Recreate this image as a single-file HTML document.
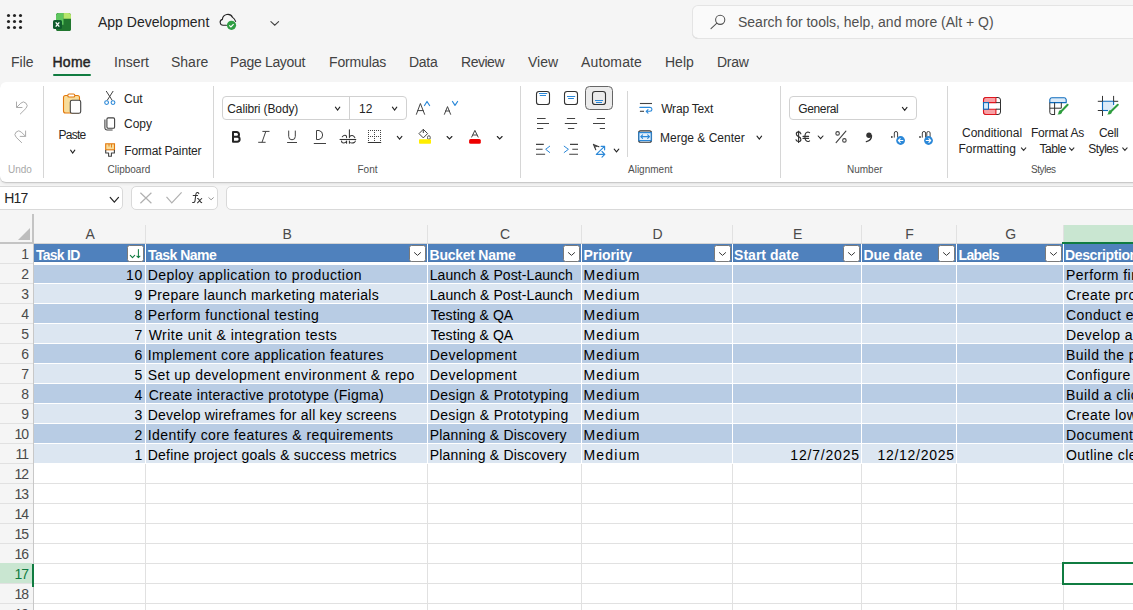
<!DOCTYPE html>
<html><head><meta charset="utf-8"><style>
html,body{margin:0;padding:0;}
body{width:1133px;height:610px;overflow:hidden;position:relative;background:#f5f5f5;font-family:"Liberation Sans", sans-serif;}
.t{position:absolute;line-height:1;white-space:nowrap;}
svg{overflow:visible;}
</style></head><body>
<svg style="position:absolute;left:0px;top:0px" width="30" height="40" viewBox="0 0 30 40" fill="none"><circle cx="8.5" cy="15.5" r="1.55" fill="#242424"/><circle cx="8.5" cy="21.5" r="1.55" fill="#242424"/><circle cx="8.5" cy="27.5" r="1.55" fill="#242424"/><circle cx="14.5" cy="15.5" r="1.55" fill="#242424"/><circle cx="14.5" cy="21.5" r="1.55" fill="#242424"/><circle cx="14.5" cy="27.5" r="1.55" fill="#242424"/><circle cx="20.5" cy="15.5" r="1.55" fill="#242424"/><circle cx="20.5" cy="21.5" r="1.55" fill="#242424"/><circle cx="20.5" cy="27.5" r="1.55" fill="#242424"/></svg>
<svg style="position:absolute;left:50px;top:10px" width="24" height="24" viewBox="50 10 24 24" fill="none"><rect x="56" y="13" width="15" height="18" rx="2.6" fill="#1f6b2e"/><path d="M59 13 H63.5 V18.8 H71 V28.4 A2.6 2.6 0 0 1 68.4 31 H58.6 A2.6 2.6 0 0 1 56 28.4 V16 A3 3 0 0 1 59 13Z" fill="#21762f"/><path d="M59 13 H63.5 V24.8 H56 V16 A3 3 0 0 1 59 13Z" fill="#5fc65f"/><path d="M63.5 13 H68.4 A2.6 2.6 0 0 1 71 15.6 V18.8 H63.5Z" fill="#b6e76c"/><rect x="53" y="20" width="9" height="9" rx="1.6" fill="#0f5c2d"/><path d="M55.7 22.3 L59.3 26.7 M59.3 22.3 L55.7 26.7" stroke="#fff" stroke-width="1.3"/></svg>
<div class="t" style="left:98px;top:15.15px;font-size:14px;color:#242424;">App Development</div>
<svg style="position:absolute;left:215px;top:10px" width="26" height="24" viewBox="215 10 26 24" fill="none"><path d="M226.5 25.3 H223.3 A3 3 0 0 1 222.4 19.4 A5.4 5.4 0 0 1 232.6 17.4 Q234.6 18.8 235.6 21.4" stroke="#242424" stroke-width="1.1" stroke-linecap="round"/><circle cx="231.5" cy="25.3" r="4.6" fill="#2f9e44"/><path d="M229.3 25.4 L230.9 26.9 L233.6 24.1" stroke="#fff" stroke-width="1.2" /></svg>
<svg style="position:absolute;left:268px;top:19px" width="13" height="9" viewBox="268 19 13 9" fill="none"><path d="M270.9 21.7 L274.75 25.2 L278.6 21.7" stroke="#424242" stroke-width="1.1" stroke-linecap="round" stroke-linejoin="miter"/></svg>
<div style="position:absolute;left:692px;top:5px;width:470px;height:34px;background:#fafafa;border-radius:6px;box-shadow:inset 0 0 0 1px #e4e4e4, inset 0 -1px 0 #cdcdcd;"></div>
<svg style="position:absolute;left:705px;top:10px" width="24" height="24" viewBox="705 10 24 24" fill="none"><circle cx="720.2" cy="19.8" r="4.6" stroke="#505050" stroke-width="1.05"/><path d="M716.9 23.2 L711 28.6" stroke="#505050" stroke-width="1.05" stroke-linecap="round"/></svg>
<div class="t" style="left:738px;top:14.65px;font-size:14px;color:#505050;">Search for tools, help, and more (Alt + Q)</div>
<div class="t" style="left:11px;top:55.15px;font-size:14px;color:#424242;">File</div>
<div class="t" style="left:52.4px;top:55.15px;font-size:14px;color:#242424;letter-spacing:0.300px;-webkit-text-stroke:0.45px #242424;">Home</div>
<div class="t" style="left:114px;top:55.15px;font-size:14px;color:#424242;">Insert</div>
<div class="t" style="left:171px;top:55.15px;font-size:14px;color:#424242;">Share</div>
<div class="t" style="left:230px;top:55.15px;font-size:14px;color:#424242;letter-spacing:-0.330px;">Page Layout</div>
<div class="t" style="left:329px;top:55.15px;font-size:14px;color:#424242;letter-spacing:-0.140px;">Formulas</div>
<div class="t" style="left:409px;top:55.15px;font-size:14px;color:#424242;letter-spacing:-0.300px;">Data</div>
<div class="t" style="left:461px;top:55.15px;font-size:14px;color:#424242;letter-spacing:-0.480px;">Review</div>
<div class="t" style="left:528px;top:55.15px;font-size:14px;color:#424242;">View</div>
<div class="t" style="left:581px;top:55.15px;font-size:14px;color:#424242;letter-spacing:0.140px;">Automate</div>
<div class="t" style="left:665px;top:55.15px;font-size:14px;color:#424242;">Help</div>
<div class="t" style="left:717px;top:55.15px;font-size:14px;color:#424242;letter-spacing:-0.250px;">Draw</div>
<div style="position:absolute;left:53px;top:74px;width:38px;height:2px;background:#117c41;border-radius:1px;"></div>
<div style="position:absolute;left:0px;top:82px;width:1160px;height:100px;background:#fff;border-radius:6px;box-shadow:0 1px 1px rgba(0,0,0,0.14), 0 2px 3px rgba(0,0,0,0.07);"></div>
<div style="position:absolute;left:43px;top:86px;width:1px;height:92px;background:#d6d6d6;"></div>
<div style="position:absolute;left:213px;top:86px;width:1px;height:92px;background:#d6d6d6;"></div>
<div style="position:absolute;left:520px;top:86px;width:1px;height:92px;background:#d6d6d6;"></div>
<div style="position:absolute;left:780px;top:86px;width:1px;height:92px;background:#d6d6d6;"></div>
<div style="position:absolute;left:947px;top:86px;width:1px;height:92px;background:#d6d6d6;"></div>
<div style="position:absolute;left:627px;top:91px;width:1px;height:66px;background:#d6d6d6;"></div>
<svg style="position:absolute;left:12px;top:98px" width="20" height="20" viewBox="12 98 20 20" fill="none"><path d="M16.5 102 V107.5 H22" stroke="#ababab" stroke-width="1" stroke-linecap="round" stroke-linejoin="round"/><path d="M16.8 107.2 L20.8 103.2 A3.6 3.6 0 0 1 26 108.3 L20.3 114" stroke="#ababab" stroke-width="1" stroke-linecap="round"/></svg>
<svg style="position:absolute;left:12px;top:127px" width="20" height="20" viewBox="12 127 20 20" fill="none"><path d="M25.6 131 V136.4 H20.2" stroke="#ababab" stroke-width="1" stroke-linecap="round" stroke-linejoin="round"/><path d="M25.3 136.1 L21.3 132.1 A3.6 3.6 0 0 0 16.1 137.2 L21.6 142.6" stroke="#ababab" stroke-width="1" stroke-linecap="round"/></svg>
<div class="t" style="left:8px;top:164.53px;font-size:10px;color:#a8a8a8;">Undo</div>
<svg style="position:absolute;left:58px;top:90px" width="28" height="28" viewBox="58 90 28 28" fill="none"><path d="M65.5 95.5 H77.5 A2 2 0 0 1 79.5 97.5 V111 A2 2 0 0 1 77.5 113 H65.5 A2 2 0 0 1 63.5 111 V97.5 A2 2 0 0 1 65.5 95.5Z" fill="#f8dc9a" stroke="#e2780c" stroke-width="1.1"/><rect x="67.8" y="94" width="7" height="3" rx="1.3" fill="#fff" stroke="#e2780c" stroke-width="1.1"/><rect x="70.3" y="100.3" width="10.4" height="13" rx="1.8" fill="#fff" stroke="#424242" stroke-width="1.1"/></svg>
<div class="t" style="left:58.5px;top:128.54px;font-size:12px;color:#242424;letter-spacing:-0.750px;">Paste</div>
<svg style="position:absolute;left:68px;top:147px" width="10" height="8" viewBox="68 147 10 8" fill="none"><path d="M70.60000000000001 150.20000000000002 L72.7 153.0 L74.8 150.20000000000002" stroke="#242424" stroke-width="1.1" stroke-linecap="round" stroke-linejoin="miter"/></svg>
<svg style="position:absolute;left:102px;top:88px" width="16" height="20" viewBox="102 88 16 20" fill="none"><path d="M106.2 91 L112.3 100.5 M113.2 91 L107.1 100.5" stroke="#424242" stroke-width="1" /><circle cx="106.6" cy="102.6" r="1.9" stroke="#2b88d8" stroke-width="1.1"/><circle cx="113" cy="102.6" r="1.9" stroke="#2b88d8" stroke-width="1.1"/></svg>
<div class="t" style="left:124px;top:93.04px;font-size:12px;color:#242424;">Cut</div>
<svg style="position:absolute;left:102px;top:114px" width="16" height="20" viewBox="102 114 16 20" fill="none"><rect x="106.9" y="117.9" width="7.7" height="10.4" rx="1.3" stroke="#424242" stroke-width="1.1"/><path d="M104.9 119.5 V127.8 A2.2 2.2 0 0 0 107.1 130 H112.6" stroke="#424242" stroke-width="1.1" /></svg>
<div class="t" style="left:124px;top:118.44px;font-size:12px;color:#242424;">Copy</div>
<svg style="position:absolute;left:102px;top:140px" width="16" height="20" viewBox="102 140 16 20" fill="none"><rect x="105.7" y="143.8" width="8.8" height="6" fill="#f8dc9a" stroke="#e2780c" stroke-width="1.1"/><path d="M109 144 V146.5 M111.5 144 V147.5" stroke="#e2780c" stroke-width="0.9" /><path d="M105.7 150 V153 H108.6 V156.3 H111.4 V153 H114.4 V150" stroke="#424242" stroke-width="1.1" stroke-linejoin="round"/></svg>
<div class="t" style="left:124.3px;top:144.84px;font-size:12px;color:#242424;letter-spacing:-0.160px;">Format Painter</div>
<div class="t" style="left:107.5px;top:164.53px;font-size:10px;color:#505050;">Clipboard</div>
<div style="position:absolute;left:222px;top:96px;width:185px;height:24px;border:1px solid #d1d1d1;border-radius:4px;box-sizing:border-box;background:#fff;"></div>
<div style="position:absolute;left:349px;top:97px;width:1px;height:22px;background:#d1d1d1;"></div>
<div class="t" style="left:227.3px;top:102.94px;font-size:12px;color:#242424;letter-spacing:-0.130px;">Calibri (Body)</div>
<svg style="position:absolute;left:333px;top:104px" width="10" height="8" viewBox="333 104 10 8" fill="none"><path d="M335.4 107.2 L337.6 110.1 L339.8 107.2" stroke="#242424" stroke-width="1.1" stroke-linecap="round" stroke-linejoin="miter"/></svg>
<div class="t" style="left:359px;top:102.94px;font-size:12px;color:#242424;">12</div>
<svg style="position:absolute;left:390px;top:104px" width="10" height="8" viewBox="390 104 10 8" fill="none"><path d="M392.4 107.2 L394.6 110.1 L396.8 107.2" stroke="#242424" stroke-width="1.1" stroke-linecap="round" stroke-linejoin="miter"/></svg>
<svg style="position:absolute;left:412px;top:98px" width="22" height="20" viewBox="412 98 22 20" fill="none"><path d="M416.4 114.3 L420.4 103.5 L424.6 114.3 M417.8 110.6 H423.2" stroke="#424242" stroke-width="1" stroke-linecap="round" stroke-linejoin="round"/><path d="M424.5 105.5 L427 101.5 L429.6 105.5" stroke="#2b88d8" stroke-width="1.2" stroke-linecap="round" stroke-linejoin="round"/></svg>
<svg style="position:absolute;left:440px;top:98px" width="22" height="20" viewBox="440 98 22 20" fill="none"><path d="M444.4 114.3 L447.5 106.6 L450.6 114.3 M445.5 111 H449.5" stroke="#424242" stroke-width="1" stroke-linecap="round" stroke-linejoin="round"/><path d="M452.5 101.5 L455 105.3 L457.6 101.5" stroke="#2b88d8" stroke-width="1.2" stroke-linecap="round" stroke-linejoin="round"/></svg>
<svg style="position:absolute;left:228px;top:127px" width="16" height="20" viewBox="228 127 16 20" fill="none"><path d="M233 132 H236.6 A2.4 2.4 0 0 1 236.6 136.8 H233 Z M233 136.8 H237.2 A2.45 2.45 0 0 1 237.2 141.7 H233 Z" stroke="#242424" stroke-width="2" stroke-linejoin="round"/></svg>
<svg style="position:absolute;left:255px;top:127px" width="18" height="20" viewBox="255 127 18 20" fill="none"><path d="M262.4 131.4 H269.5 M258.2 142.3 H265.6 M265.8 131.4 L262 142.3" stroke="#424242" stroke-width="1" /></svg>
<svg style="position:absolute;left:284px;top:127px" width="16" height="20" viewBox="284 127 16 20" fill="none"><path d="M288.7 130.6 V136.5 A3.3 3.3 0 0 0 295.3 136.5 V130.6 M287.1 142.5 H297" stroke="#424242" stroke-width="1" /></svg>
<svg style="position:absolute;left:310px;top:127px" width="20" height="20" viewBox="310 127 20 20" fill="none"><path d="M316.5 130.5 H319 A4.6 4.6 0 0 1 319 139.5 H316.5 Z M313.8 143.5 H326" stroke="#424242" stroke-width="1" /></svg>
<svg style="position:absolute;left:337px;top:126px" width="22" height="20" viewBox="337 126 22 20" fill="none"><path d="M339.6 139.5 H356.2" stroke="#333" stroke-width="1.1" /><path d="M342.3 136.8 Q344 134.6 345.9 135.5 Q346.6 136 346.6 137.6 M341.5 141 Q341.6 143 343.9 143 Q346 143 346.6 141.2 M346.6 141 V143.3" stroke="#333" stroke-width="1.05" stroke-linecap="round"/><path d="M349.4 129.8 V137.6 M349.5 136.6 Q352.6 133.8 354.8 137.6 M349.4 141 V143.3 M349.6 142.4 Q352.2 143.8 354.6 142.2 Q355.3 141.6 355.3 141" stroke="#333" stroke-width="1.05" stroke-linecap="round"/></svg>
<svg style="position:absolute;left:366px;top:128px" width="18" height="18" viewBox="366 128 18 18" fill="none"><rect x="368" y="130" width="1" height="1" fill="#444"/><rect x="368" y="132" width="1" height="1" fill="#444"/><rect x="368" y="134" width="1" height="1" fill="#444"/><rect x="368" y="136" width="1" height="1" fill="#444"/><rect x="368" y="138" width="1" height="1" fill="#444"/><rect x="368" y="140" width="1" height="1" fill="#444"/><rect x="370" y="130" width="1" height="1" fill="#444"/><rect x="370" y="136" width="1" height="1" fill="#444"/><rect x="372" y="130" width="1" height="1" fill="#444"/><rect x="372" y="136" width="1" height="1" fill="#444"/><rect x="374" y="130" width="1" height="1" fill="#444"/><rect x="374" y="132" width="1" height="1" fill="#444"/><rect x="374" y="134" width="1" height="1" fill="#444"/><rect x="374" y="136" width="1" height="1" fill="#444"/><rect x="374" y="138" width="1" height="1" fill="#444"/><rect x="374" y="140" width="1" height="1" fill="#444"/><rect x="376" y="130" width="1" height="1" fill="#444"/><rect x="376" y="136" width="1" height="1" fill="#444"/><rect x="378" y="130" width="1" height="1" fill="#444"/><rect x="378" y="136" width="1" height="1" fill="#444"/><rect x="380" y="130" width="1" height="1" fill="#444"/><rect x="380" y="132" width="1" height="1" fill="#444"/><rect x="380" y="134" width="1" height="1" fill="#444"/><rect x="380" y="136" width="1" height="1" fill="#444"/><rect x="380" y="138" width="1" height="1" fill="#444"/><rect x="380" y="140" width="1" height="1" fill="#444"/><path d="M368.3 142.5 H380.7" stroke="#333" stroke-width="1.2" stroke-linecap="round"/></svg>
<svg style="position:absolute;left:394px;top:133px" width="10" height="8" viewBox="394 133 10 8" fill="none"><path d="M397.29999999999995 136.3 L399.59999999999997 139.1 L401.9 136.3" stroke="#242424" stroke-width="1.1" stroke-linecap="round" stroke-linejoin="miter"/></svg>
<svg style="position:absolute;left:416px;top:127px" width="18" height="20" viewBox="416 127 18 20" fill="none"><path d="M419 133.6 L423.3 129.3 L427.6 133.6 L423.3 137.9 Z" stroke="#424242" stroke-width="1" stroke-linejoin="round"/><path d="M423.3 129.1 V133" stroke="#424242" stroke-width="1" /><ellipse cx="428.9" cy="137.6" rx="1.4" ry="1.9" stroke="#424242" stroke-width="0.9"/><rect x="419" y="139.3" width="12" height="4.4" rx="0.8" fill="#ffee00"/></svg>
<svg style="position:absolute;left:444px;top:134px" width="10" height="8" viewBox="444 134 10 8" fill="none"><path d="M447.09999999999997 136.5 L449.5 138.99999999999997 L451.90000000000003 136.5" stroke="#242424" stroke-width="1.1" stroke-linecap="round" stroke-linejoin="miter"/></svg>
<svg style="position:absolute;left:467px;top:127px" width="16" height="20" viewBox="467 127 16 20" fill="none"><path d="M471.5 137.4 L474.9 130.4 L478.3 137.4 M472.6 135 H477.2" stroke="#424242" stroke-width="1" stroke-linejoin="round"/><rect x="469.1" y="139" width="11.7" height="4.7" rx="1.5" fill="#ee0000"/></svg>
<svg style="position:absolute;left:494px;top:134px" width="10" height="8" viewBox="494 134 10 8" fill="none"><path d="M497.29999999999995 136.5 L499.7 138.99999999999997 L502.1 136.5" stroke="#242424" stroke-width="1.1" stroke-linecap="round" stroke-linejoin="miter"/></svg>
<div class="t" style="left:357.5px;top:164.53px;font-size:10px;color:#505050;">Font</div>
<div style="position:absolute;left:585px;top:86px;width:28px;height:24px;background:#ebebeb;border:1px solid #666;border-radius:4.5px;box-sizing:border-box;"></div>
<svg style="position:absolute;left:534px;top:89px" width="18" height="18" viewBox="534 89 18 18" fill="none"><rect x="536.5" y="91.5" width="13" height="13" rx="2.6" stroke="#333" stroke-width="1.1"/><path d="M539 93.5 H547.2 M539.8 95.5 H546" stroke="#2b88d8" stroke-width="1" /></svg>
<svg style="position:absolute;left:562px;top:89px" width="18" height="18" viewBox="562 89 18 18" fill="none"><rect x="564.5" y="91.5" width="13" height="13" rx="2.6" stroke="#333" stroke-width="1.1"/><path d="M567 96.5 H575.2 M568.1 98.5 H573.9" stroke="#2b88d8" stroke-width="1" /></svg>
<svg style="position:absolute;left:590px;top:89px" width="18" height="18" viewBox="590 89 18 18" fill="none"><rect x="592.5" y="91.5" width="13" height="13" rx="2.6" stroke="#333" stroke-width="1.1"/><path d="M595 100.5 H603 M596 102.5 H602" stroke="#2b88d8" stroke-width="1" /></svg>
<svg style="position:absolute;left:534px;top:115px" width="18" height="16" viewBox="534 115 18 16" fill="none"><path d="M537 118.5 H545.6 M537 123.5 H549 M537 128.5 H543.3" stroke="#424242" stroke-width="1.1" /></svg>
<svg style="position:absolute;left:562px;top:115px" width="18" height="16" viewBox="562 115 18 16" fill="none"><path d="M566.9 118.5 H575.1 M564.8 123.5 H577.1 M567.9 128.5 H574.3" stroke="#424242" stroke-width="1.1" /></svg>
<svg style="position:absolute;left:590px;top:115px" width="18" height="16" viewBox="590 115 18 16" fill="none"><path d="M596.8 118.5 H605 M593 123.5 H605 M599.8 128.5 H605" stroke="#424242" stroke-width="1.1" /></svg>
<svg style="position:absolute;left:534px;top:141px" width="18" height="16" viewBox="534 141 18 16" fill="none"><path d="M536 144.4 H543.8 M536 149.3 H542.6 M536 154.3 H545.1" stroke="#424242" stroke-width="1.1" /><path d="M549.7 146.2 L545.7 149.3 L549.7 152.5" stroke="#2b88d8" stroke-width="1" stroke-linecap="round" stroke-linejoin="round"/></svg>
<svg style="position:absolute;left:562px;top:141px" width="18" height="16" viewBox="562 141 18 16" fill="none"><path d="M570 144.4 H578 M572.3 149.3 H578 M569.2 154.3 H578" stroke="#424242" stroke-width="1.1" /><path d="M564.2 146.2 L568.4 149.3 L564.2 152.5" stroke="#2b88d8" stroke-width="1" stroke-linecap="round" stroke-linejoin="round"/></svg>
<svg style="position:absolute;left:590px;top:141px" width="18" height="19" viewBox="590 141 18 19" fill="none"><path d="M593.4 144.4 L595.8 149.8 M593.4 144.4 L598.9 146.7 M594.5 147.2 L597.1 146" stroke="#333" stroke-width="1.05" stroke-linecap="round" stroke-linejoin="round"/><path d="M596.3 154.3 L604.5 146.4 M601.1 146.3 H604.6 V149.8 M596.3 154.3 H604.8 M602 151.5 L604.8 154.3 L602 157.1" stroke="#2b88d8" stroke-width="1.15" stroke-linecap="round" stroke-linejoin="round"/></svg>
<svg style="position:absolute;left:611px;top:146px" width="10" height="8" viewBox="611 146 10 8" fill="none"><path d="M614.1999999999999 149.20000000000002 L616.5 151.9 L618.8 149.20000000000002" stroke="#242424" stroke-width="1.1" stroke-linecap="round" stroke-linejoin="miter"/></svg>
<svg style="position:absolute;left:637px;top:100px" width="18" height="16" viewBox="637 100 18 16" fill="none"><path d="M639.9 103.5 H652" stroke="#424242" stroke-width="1.1" /><path d="M639.9 111.3 H644" stroke="#424242" stroke-width="1.1" /><path d="M639.9 107.4 H650 A1.95 1.95 0 0 1 650 111.3 H646.3 M648 109.6 L646.2 111.3 L648 113.1" stroke="#2b88d8" stroke-width="1.1" stroke-linecap="round" stroke-linejoin="round"/></svg>
<svg style="position:absolute;left:636px;top:128px" width="18" height="17" viewBox="636 128 18 17" fill="none"><rect x="638.6" y="130.9" width="12.9" height="11.3" rx="2" stroke="#333" stroke-width="1.1"/><rect x="638.9" y="132.6" width="12.3" height="8" fill="#e6f1fb" stroke="#2b88d8" stroke-width="1.2"/><path d="M640.8 136.6 H649.5 M642.6 134.8 L640.8 136.6 L642.6 138.4 M647.7 134.8 L649.5 136.6 L647.7 138.4" stroke="#2b88d8" stroke-width="1.1" stroke-linecap="round" stroke-linejoin="round"/></svg>
<div class="t" style="left:661.2px;top:102.84px;font-size:12px;color:#242424;letter-spacing:-0.190px;">Wrap Text</div>
<div class="t" style="left:660px;top:131.74px;font-size:12px;color:#242424;">Merge &amp; Center</div>
<svg style="position:absolute;left:754px;top:133px" width="10" height="8" viewBox="754 133 10 8" fill="none"><path d="M757.0 136.20000000000002 L759.3000000000001 139.1 L761.6 136.20000000000002" stroke="#242424" stroke-width="1.1" stroke-linecap="round" stroke-linejoin="miter"/></svg>
<div class="t" style="left:628px;top:164.53px;font-size:10px;color:#505050;">Alignment</div>
<div style="position:absolute;left:789px;top:96px;width:128px;height:24px;border:1px solid #d1d1d1;border-radius:4px;box-sizing:border-box;background:#fff;"></div>
<div class="t" style="left:798.3px;top:102.84px;font-size:12px;color:#242424;letter-spacing:-0.380px;">General</div>
<svg style="position:absolute;left:900px;top:105px" width="10" height="8" viewBox="900 105 10 8" fill="none"><path d="M902.4 107.4 L904.7 110.3 L907.0 107.4" stroke="#242424" stroke-width="1.1" stroke-linecap="round" stroke-linejoin="miter"/></svg>
<svg style="position:absolute;left:793px;top:128px" width="20" height="18" viewBox="793 128 20 18" fill="none"><path d="M800.9 133.8 Q800.3 131.9 798.5 131.9 Q796.3 131.9 796.3 134.1 Q796.3 135.7 798.5 136.6 Q800.9 137.5 800.9 139.4 Q800.9 141.5 798.5 141.5 Q796.6 141.5 796 139.8" stroke="#333" stroke-width="1.15" stroke-linecap="round"/><path d="M798.6 130.8 V142.9" stroke="#333" stroke-width="1.1" /><path d="M809.6 132.7 Q808.8 132 807.8 132 Q805 132.2 804.9 136.8 Q805 141.3 807.8 141.5 Q808.8 141.5 809.6 140.8 M803 136.4 H808.6 M803 138.4 H808.6" stroke="#333" stroke-width="1.1" stroke-linecap="round"/></svg>
<svg style="position:absolute;left:815px;top:133px" width="10" height="8" viewBox="815 133 10 8" fill="none"><path d="M818.1999999999999 136.0 L820.5999999999999 138.7 L823.0 136.0" stroke="#242424" stroke-width="1.1" stroke-linecap="round" stroke-linejoin="miter"/></svg>
<svg style="position:absolute;left:833px;top:129px" width="16" height="16" viewBox="833 129 16 16" fill="none"><circle cx="837.6" cy="133.4" r="1.75" stroke="#424242" stroke-width="1.1"/><circle cx="844.4" cy="140.4" r="1.75" stroke="#424242" stroke-width="1.1"/><path d="M836.1 142.6 L845.9 131.2" stroke="#424242" stroke-width="1.1" stroke-linecap="round"/></svg>
<svg style="position:absolute;left:863px;top:130px" width="12" height="14" viewBox="863 130 12 14" fill="none"><circle cx="869" cy="135.3" r="2.7" fill="#333"/><path d="M871.5 135.8 Q871.6 140.4 866.4 141.6" stroke="#333" stroke-width="1.4" stroke-linecap="round"/></svg>
<svg style="position:absolute;left:889px;top:129px" width="17" height="17" viewBox="889 129 17 17" fill="none"><rect x="891" y="136.2" width="1.6" height="1.6" fill="#333"/><path d="M894.3 137.6 V133 Q894.3 131.5 896 131.5 Q897.6 131.5 897.6 133 V137.6" stroke="#424242" stroke-width="1" /><circle cx="900.6" cy="140.5" r="4.4" fill="#2b88d8"/><path d="M902.9 140.5 H898.4 M900.2 138.7 L898.4 140.5 L900.2 142.3" stroke="#fff" stroke-width="1.1" stroke-linecap="round" stroke-linejoin="round"/></svg>
<svg style="position:absolute;left:917px;top:129px" width="17" height="17" viewBox="917 129 17 17" fill="none"><rect x="919.2" y="136.2" width="1.6" height="1.6" fill="#333"/><path d="M922.3 137.6 V133 Q922.3 131.5 924 131.5 Q925.6 131.5 925.6 133 V137.6 M926.8 137.6 V133 Q926.8 131.5 928.4 131.5 Q930.1 131.5 930.1 133 V137.6" stroke="#424242" stroke-width="1" /><circle cx="928.5" cy="140.5" r="4.4" fill="#2b88d8"/><path d="M926.2 140.5 H930.7 M928.9 138.7 L930.7 140.5 L928.9 142.3" stroke="#fff" stroke-width="1.1" stroke-linecap="round" stroke-linejoin="round"/></svg>
<div class="t" style="left:847px;top:164.53px;font-size:10px;color:#505050;">Number</div>
<svg style="position:absolute;left:980px;top:94px" width="24" height="24" viewBox="980 94 24 24" fill="none"><rect x="983.5" y="97.5" width="17" height="17" rx="2.5" fill="#fff" stroke="#333" stroke-width="1"/><path d="M986 97.5 H995.9 V102.6 H983.5 V100 A2.5 2.5 0 0 1 986 97.5Z" fill="#f7a1a5" stroke="#e0161e" stroke-width="1.1"/><path d="M983.5 109.2 H995.9 V114.5 H986 A2.5 2.5 0 0 1 983.5 112Z" fill="#f7a1a5" stroke="#e0161e" stroke-width="1.1"/><rect x="983.5" y="102.6" width="5" height="6.6" fill="#dcebf9" stroke="#0f6cbd" stroke-width="1.1"/><path d="M995.9 102.6 H1000.5 M995.9 109.2 H1000.5" stroke="#333" stroke-width="1" /></svg>
<div class="t" style="left:962px;top:126.64px;font-size:12px;color:#242424;">Conditional</div>
<div class="t" style="left:958.5px;top:142.54px;font-size:12px;color:#242424;">Formatting</div>
<svg style="position:absolute;left:1019px;top:145px" width="10" height="8" viewBox="1019 145 10 8" fill="none"><path d="M1021.4 147.9 L1023.6 150.39999999999998 L1025.8 147.9" stroke="#333" stroke-width="1.1" stroke-linecap="round" stroke-linejoin="miter"/></svg>
<svg style="position:absolute;left:1046px;top:94px" width="26" height="24" viewBox="1046 94 26 24" fill="none"><path d="M1049.8 102.6 V99.6 A2.2 2.2 0 0 1 1052 97.8 H1064 A2.2 2.2 0 0 1 1066.2 99.6 V102.6 Z" fill="#dcebf9" stroke="#0f6cbd" stroke-width="1.1"/><path d="M1049.8 102.6 V112.3 A2.2 2.2 0 0 0 1052 114.5 H1055 M1049.8 108.2 H1061.3 M1054.6 102.6 V114.5 M1061.3 102.6 V108.2" stroke="#333" stroke-width="1" /><path d="M1067.6 104.8 L1061.6 111" stroke="#2e9d3e" stroke-width="2" stroke-linecap="round"/><path d="M1060.4 110 Q1062.6 111 1062 113 Q1060.5 114.8 1057.4 114.6 Q1058.6 113.6 1058.6 112 Q1058.8 110.4 1060.4 110Z" fill="#2e9d3e"/></svg>
<div class="t" style="left:1030.9px;top:126.64px;font-size:12px;color:#242424;letter-spacing:-0.160px;">Format As</div>
<div class="t" style="left:1039.5px;top:142.54px;font-size:12px;color:#242424;letter-spacing:-0.450px;">Table</div>
<svg style="position:absolute;left:1067px;top:145px" width="10" height="8" viewBox="1067 145 10 8" fill="none"><path d="M1069.5 147.9 L1071.6999999999998 150.39999999999998 L1073.8999999999999 147.9" stroke="#333" stroke-width="1.1" stroke-linecap="round" stroke-linejoin="miter"/></svg>
<svg style="position:absolute;left:1095px;top:93px" width="26" height="26" viewBox="1095 93 26 26" fill="none"><rect x="1102.5" y="101.3" width="11.1" height="9.2" fill="#dcebf9"/><path d="M1102.5 110.5 V101.3 H1113.6 V105" stroke="#0f6cbd" stroke-width="1.1" /><path d="M1102.5 110.5 H1108" stroke="#0f6cbd" stroke-width="1.1" /><path d="M1102.5 95.9 V101.3 M1102.5 110.5 V116 M1113.6 95.9 V101.3 M1097.8 101.3 H1102.5 M1113.6 101.3 H1118.2 M1097.8 110.5 H1102.5" stroke="#333" stroke-width="1" /><path d="M1117.8 104.8 L1111.4 111" stroke="#2e9d3e" stroke-width="2" stroke-linecap="round"/><path d="M1110.2 110 Q1112.4 111 1111.8 113 Q1110.3 114.8 1107.2 114.6 Q1108.4 113.6 1108.4 112 Q1108.6 110.4 1110.2 110Z" fill="#2e9d3e"/></svg>
<div class="t" style="left:1099px;top:126.64px;font-size:12px;color:#242424;letter-spacing:-0.350px;">Cell</div>
<div class="t" style="left:1088.3px;top:142.54px;font-size:12px;color:#242424;letter-spacing:-0.500px;">Styles</div>
<svg style="position:absolute;left:1120px;top:145px" width="10" height="8" viewBox="1120 145 10 8" fill="none"><path d="M1122.7 147.9 L1124.8999999999999 150.39999999999998 L1127.1 147.9" stroke="#333" stroke-width="1.1" stroke-linecap="round" stroke-linejoin="miter"/></svg>
<div class="t" style="left:1031px;top:164.53px;font-size:10px;color:#505050;letter-spacing:-0.440px;">Styles</div>
<div style="position:absolute;left:-6px;top:186px;width:129px;height:24px;border:1px solid #d9d9d9;border-radius:5px;box-sizing:border-box;background:#fff;"></div>
<div class="t" style="left:4.3px;top:191.15px;font-size:14px;color:#242424;letter-spacing:-0.850px;">H17</div>
<svg style="position:absolute;left:107px;top:195px" width="14" height="10" viewBox="107 195 14 10" fill="none"><path d="M110.2 197.4 L114.35 202.1 L118.49999999999999 197.4" stroke="#242424" stroke-width="1.2" stroke-linecap="round" stroke-linejoin="miter"/></svg>
<div style="position:absolute;left:131px;top:186px;width:87px;height:24px;border:1px solid #d9d9d9;border-radius:5px;box-sizing:border-box;background:#fff;"></div>
<svg style="position:absolute;left:136px;top:189px" width="20" height="18" viewBox="136 189 20 18" fill="none"><path d="M140.4 192.8 L151.4 203.2 M151.4 192.8 L140.4 203.2" stroke="#b0b0b0" stroke-width="1.2" /></svg>
<svg style="position:absolute;left:164px;top:189px" width="21" height="18" viewBox="164 189 21 18" fill="none"><path d="M166.5 196.8 L171.8 202.8 L181.6 192.4" stroke="#b0b0b0" stroke-width="1.2" /></svg>
<svg style="position:absolute;left:188px;top:189px" width="18" height="18" viewBox="188 189 18 18" fill="none"><path d="M198.8 193.6 Q198.2 192.4 197.2 192.6 Q196 192.9 195.8 194.8 L195 200.8 Q194.6 202.9 192.6 202.5 M193.2 195.5 H197.6" stroke="#333" stroke-width="1.05" stroke-linecap="round"/><path d="M197.6 198.5 Q198.4 198.3 199.6 200.6 Q200.8 202.8 201.7 202.6 M201.7 198.5 L197.5 202.8" stroke="#333" stroke-width="1.05" stroke-linecap="round"/></svg>
<svg style="position:absolute;left:206px;top:195px" width="10" height="7" viewBox="206 195 10 7" fill="none"><path d="M208.8 197.70000000000002 L211.1 199.8 L213.4 197.70000000000002" stroke="#8a8a8a" stroke-width="0.9" stroke-linecap="round" stroke-linejoin="miter"/></svg>
<div style="position:absolute;left:226px;top:186px;width:920px;height:24px;border:1px solid #d9d9d9;border-radius:5px;box-sizing:border-box;background:#fff;"></div>
<div style="position:absolute;left:34px;top:244px;width:1100px;height:370px;background:#fff;"></div>
<div style="position:absolute;left:0px;top:263px;width:1133px;height:1px;background:#e1e1e1;"></div>
<div style="position:absolute;left:0px;top:283px;width:1133px;height:1px;background:#e1e1e1;"></div>
<div style="position:absolute;left:0px;top:303px;width:1133px;height:1px;background:#e1e1e1;"></div>
<div style="position:absolute;left:0px;top:323px;width:1133px;height:1px;background:#e1e1e1;"></div>
<div style="position:absolute;left:0px;top:343px;width:1133px;height:1px;background:#e1e1e1;"></div>
<div style="position:absolute;left:0px;top:363px;width:1133px;height:1px;background:#e1e1e1;"></div>
<div style="position:absolute;left:0px;top:383px;width:1133px;height:1px;background:#e1e1e1;"></div>
<div style="position:absolute;left:0px;top:403px;width:1133px;height:1px;background:#e1e1e1;"></div>
<div style="position:absolute;left:0px;top:423px;width:1133px;height:1px;background:#e1e1e1;"></div>
<div style="position:absolute;left:0px;top:443px;width:1133px;height:1px;background:#e1e1e1;"></div>
<div style="position:absolute;left:0px;top:463px;width:1133px;height:1px;background:#e1e1e1;"></div>
<div style="position:absolute;left:0px;top:483px;width:1133px;height:1px;background:#e1e1e1;"></div>
<div style="position:absolute;left:0px;top:503px;width:1133px;height:1px;background:#e1e1e1;"></div>
<div style="position:absolute;left:0px;top:523px;width:1133px;height:1px;background:#e1e1e1;"></div>
<div style="position:absolute;left:0px;top:543px;width:1133px;height:1px;background:#e1e1e1;"></div>
<div style="position:absolute;left:0px;top:563px;width:1133px;height:1px;background:#e1e1e1;"></div>
<div style="position:absolute;left:0px;top:583px;width:1133px;height:1px;background:#e1e1e1;"></div>
<div style="position:absolute;left:0px;top:603px;width:1133px;height:1px;background:#e1e1e1;"></div>
<div style="position:absolute;left:0px;top:623px;width:1133px;height:1px;background:#e1e1e1;"></div>
<div style="position:absolute;left:145px;top:225px;width:1px;height:400px;background:#e1e1e1;"></div>
<div style="position:absolute;left:427px;top:225px;width:1px;height:400px;background:#e1e1e1;"></div>
<div style="position:absolute;left:581px;top:225px;width:1px;height:400px;background:#e1e1e1;"></div>
<div style="position:absolute;left:732px;top:225px;width:1px;height:400px;background:#e1e1e1;"></div>
<div style="position:absolute;left:861px;top:225px;width:1px;height:400px;background:#e1e1e1;"></div>
<div style="position:absolute;left:956px;top:225px;width:1px;height:400px;background:#e1e1e1;"></div>
<div style="position:absolute;left:1063px;top:225px;width:1px;height:400px;background:#e1e1e1;"></div>
<div style="position:absolute;left:0px;top:243px;width:1133px;height:1px;background:#d4d4d4;"></div>
<div style="position:absolute;left:32px;top:214px;width:2px;height:30px;background:#c4c4c4;"></div>
<div style="position:absolute;left:0px;top:242px;width:34px;height:2px;background:#c4c4c4;"></div>
<div style="position:absolute;left:33px;top:244px;width:1px;height:380px;background:#c8c8c8;"></div>
<svg style="position:absolute;left:16px;top:226px" width="16" height="16" viewBox="16 226 16 16" fill="none"><path d="M30 228 V240 H18Z" fill="#bdbdbd"/></svg>
<div style="position:absolute;left:34px;top:244px;width:1100px;height:18px;background:#4f81bd;"></div>
<div style="position:absolute;left:34px;top:261px;width:1100px;height:1px;background:#4a78b0;"></div>
<div style="position:absolute;left:34px;top:262px;width:1100px;height:3px;background:#fff;"></div>
<div style="position:absolute;left:34px;top:265px;width:1100px;height:18px;background:#b8cce4;"></div>
<div style="position:absolute;left:34px;top:283px;width:1100px;height:1px;background:#fff;"></div>
<div style="position:absolute;left:34px;top:284px;width:1100px;height:19px;background:#dce6f1;"></div>
<div style="position:absolute;left:34px;top:303px;width:1100px;height:1px;background:#fff;"></div>
<div style="position:absolute;left:34px;top:304px;width:1100px;height:19px;background:#b8cce4;"></div>
<div style="position:absolute;left:34px;top:323px;width:1100px;height:1px;background:#fff;"></div>
<div style="position:absolute;left:34px;top:324px;width:1100px;height:19px;background:#dce6f1;"></div>
<div style="position:absolute;left:34px;top:343px;width:1100px;height:1px;background:#fff;"></div>
<div style="position:absolute;left:34px;top:344px;width:1100px;height:19px;background:#b8cce4;"></div>
<div style="position:absolute;left:34px;top:363px;width:1100px;height:1px;background:#fff;"></div>
<div style="position:absolute;left:34px;top:364px;width:1100px;height:19px;background:#dce6f1;"></div>
<div style="position:absolute;left:34px;top:383px;width:1100px;height:1px;background:#fff;"></div>
<div style="position:absolute;left:34px;top:384px;width:1100px;height:19px;background:#b8cce4;"></div>
<div style="position:absolute;left:34px;top:403px;width:1100px;height:1px;background:#fff;"></div>
<div style="position:absolute;left:34px;top:404px;width:1100px;height:19px;background:#dce6f1;"></div>
<div style="position:absolute;left:34px;top:423px;width:1100px;height:1px;background:#fff;"></div>
<div style="position:absolute;left:34px;top:424px;width:1100px;height:19px;background:#b8cce4;"></div>
<div style="position:absolute;left:34px;top:443px;width:1100px;height:1px;background:#fff;"></div>
<div style="position:absolute;left:34px;top:444px;width:1100px;height:19px;background:#dce6f1;"></div>
<div style="position:absolute;left:34px;top:463px;width:1100px;height:1px;background:#fff;"></div>
<div style="position:absolute;left:145px;top:244px;width:1px;height:220px;background:#fff;"></div>
<div style="position:absolute;left:427px;top:244px;width:1px;height:220px;background:#fff;"></div>
<div style="position:absolute;left:581px;top:244px;width:1px;height:220px;background:#fff;"></div>
<div style="position:absolute;left:732px;top:244px;width:1px;height:220px;background:#fff;"></div>
<div style="position:absolute;left:861px;top:244px;width:1px;height:220px;background:#fff;"></div>
<div style="position:absolute;left:956px;top:244px;width:1px;height:220px;background:#fff;"></div>
<div style="position:absolute;left:1063px;top:244px;width:1px;height:220px;background:#fff;"></div>
<div style="position:absolute;left:1064px;top:225px;width:80px;height:17px;background:#c9e6d1;"></div>
<div style="position:absolute;left:1062px;top:242px;width:80px;height:2px;background:#107c41;"></div>
<div style="position:absolute;left:0px;top:563px;width:32px;height:20px;background:#c9e6d1;"></div>
<div style="position:absolute;left:32px;top:564px;width:2px;height:23px;background:#107c41;"></div>
<div style="position:absolute;left:1062px;top:562px;width:90px;height:23px;border:2px solid #107c41;box-sizing:border-box;"></div>
<div class="t" style="left:-10.200000000000003px;width:200px;text-align:center;top:227.15px;font-size:14px;color:#4a4a4a;letter-spacing:-0.600px;">A</div>
<div class="t" style="left:186.8px;width:200px;text-align:center;top:227.15px;font-size:14px;color:#4a4a4a;letter-spacing:-0.600px;">B</div>
<div class="t" style="left:404.8px;width:200px;text-align:center;top:227.15px;font-size:14px;color:#4a4a4a;letter-spacing:-0.600px;">C</div>
<div class="t" style="left:557.3px;width:200px;text-align:center;top:227.15px;font-size:14px;color:#4a4a4a;letter-spacing:-0.600px;">D</div>
<div class="t" style="left:697.3px;width:200px;text-align:center;top:227.15px;font-size:14px;color:#4a4a4a;letter-spacing:-0.600px;">E</div>
<div class="t" style="left:809.3px;width:200px;text-align:center;top:227.15px;font-size:14px;color:#4a4a4a;letter-spacing:-0.600px;">F</div>
<div class="t" style="left:910.3px;width:200px;text-align:center;top:227.15px;font-size:14px;color:#4a4a4a;letter-spacing:-0.600px;">G</div>
<div class="t" style="right:1104.8px;top:247.15px;font-size:14px;color:#4a4a4a;letter-spacing:-0.900px;">1</div>
<div class="t" style="right:1104.8px;top:267.15px;font-size:14px;color:#4a4a4a;letter-spacing:-0.900px;">2</div>
<div class="t" style="right:1104.8px;top:287.15px;font-size:14px;color:#4a4a4a;letter-spacing:-0.900px;">3</div>
<div class="t" style="right:1104.8px;top:307.15px;font-size:14px;color:#4a4a4a;letter-spacing:-0.900px;">4</div>
<div class="t" style="right:1104.8px;top:327.15px;font-size:14px;color:#4a4a4a;letter-spacing:-0.900px;">5</div>
<div class="t" style="right:1104.8px;top:347.15px;font-size:14px;color:#4a4a4a;letter-spacing:-0.900px;">6</div>
<div class="t" style="right:1104.8px;top:367.15px;font-size:14px;color:#4a4a4a;letter-spacing:-0.900px;">7</div>
<div class="t" style="right:1104.8px;top:387.15px;font-size:14px;color:#4a4a4a;letter-spacing:-0.900px;">8</div>
<div class="t" style="right:1104.8px;top:407.15px;font-size:14px;color:#4a4a4a;letter-spacing:-0.900px;">9</div>
<div class="t" style="right:1104.8px;top:427.15px;font-size:14px;color:#4a4a4a;letter-spacing:-0.900px;">10</div>
<div class="t" style="right:1104.8px;top:447.15px;font-size:14px;color:#4a4a4a;letter-spacing:-0.900px;">11</div>
<div class="t" style="right:1104.8px;top:467.15px;font-size:14px;color:#4a4a4a;letter-spacing:-0.900px;">12</div>
<div class="t" style="right:1104.8px;top:487.15px;font-size:14px;color:#4a4a4a;letter-spacing:-0.900px;">13</div>
<div class="t" style="right:1104.8px;top:507.15px;font-size:14px;color:#4a4a4a;letter-spacing:-0.900px;">14</div>
<div class="t" style="right:1104.8px;top:527.15px;font-size:14px;color:#4a4a4a;letter-spacing:-0.900px;">15</div>
<div class="t" style="right:1104.8px;top:547.15px;font-size:14px;color:#4a4a4a;letter-spacing:-0.900px;">16</div>
<div class="t" style="right:1104.8px;top:567.15px;font-size:14px;color:#107c41;letter-spacing:-0.900px;">17</div>
<div class="t" style="right:1104.8px;top:587.15px;font-size:14px;color:#4a4a4a;letter-spacing:-0.900px;">18</div>
<div class="t" style="right:1104.8px;top:607.15px;font-size:14px;color:#4a4a4a;letter-spacing:-0.900px;">19</div>
<div class="t" style="left:35.9px;top:248.15px;font-size:14px;color:#fff;font-weight:700;letter-spacing:-0.717px;">Task ID</div>
<div class="t" style="left:147.9px;top:248.15px;font-size:14px;color:#fff;font-weight:700;letter-spacing:-0.500px;">Task Name</div>
<div class="t" style="left:429.6px;top:248.15px;font-size:14px;color:#fff;font-weight:700;letter-spacing:-0.260px;">Bucket Name</div>
<div class="t" style="left:583.6px;top:248.15px;font-size:14px;color:#fff;font-weight:700;letter-spacing:-0.086px;">Priority</div>
<div class="t" style="left:734.1px;top:248.15px;font-size:14px;color:#fff;font-weight:700;">Start date</div>
<div class="t" style="left:863.5px;top:248.15px;font-size:14px;color:#fff;font-weight:700;letter-spacing:-0.057px;">Due date</div>
<div class="t" style="left:958.5px;top:248.15px;font-size:14px;color:#fff;font-weight:700;letter-spacing:-0.640px;">Labels</div>
<div class="t" style="left:1065.1px;top:248.15px;font-size:14px;color:#fff;font-weight:700;letter-spacing:-0.400px;">Description</div>
<div style="position:absolute;left:127px;top:245px;width:17px;height:17px;background:#fff;border:1px solid #7a7a7a;border-radius:2.5px;box-sizing:border-box;"></div>
<svg style="position:absolute;left:127px;top:245px" width="17" height="17" viewBox="127 245 17 17" fill="none"><path d="M130.3 255.3 L132.5 257.6 L134.7 255.3" stroke="#107c41" stroke-width="1.1" stroke-linecap="round" stroke-linejoin="round"/><path d="M138.4 249.5 V257.6 M136.9 256.2 L138.4 257.7 L139.9 256.2" stroke="#107c41" stroke-width="1.05" stroke-linecap="round" stroke-linejoin="round"/></svg>
<div style="position:absolute;left:409px;top:245px;width:17px;height:17px;background:#fff;border:1px solid #7a7a7a;border-radius:2.5px;box-sizing:border-box;"></div>
<svg style="position:absolute;left:412px;top:250px" width="12" height="8" viewBox="412 250 12 8" fill="none"><path d="M414.4 252.6 L417.5 255.39999999999998 L420.6 252.6" stroke="#3a3a3a" stroke-width="1" stroke-linecap="round" stroke-linejoin="miter"/></svg>
<div style="position:absolute;left:563px;top:245px;width:17px;height:17px;background:#fff;border:1px solid #7a7a7a;border-radius:2.5px;box-sizing:border-box;"></div>
<svg style="position:absolute;left:566px;top:250px" width="12" height="8" viewBox="566 250 12 8" fill="none"><path d="M568.4 252.6 L571.5 255.39999999999998 L574.6 252.6" stroke="#3a3a3a" stroke-width="1" stroke-linecap="round" stroke-linejoin="miter"/></svg>
<div style="position:absolute;left:714px;top:245px;width:17px;height:17px;background:#fff;border:1px solid #7a7a7a;border-radius:2.5px;box-sizing:border-box;"></div>
<svg style="position:absolute;left:717px;top:250px" width="12" height="8" viewBox="717 250 12 8" fill="none"><path d="M719.4 252.6 L722.5 255.39999999999998 L725.6 252.6" stroke="#3a3a3a" stroke-width="1" stroke-linecap="round" stroke-linejoin="miter"/></svg>
<div style="position:absolute;left:843px;top:245px;width:17px;height:17px;background:#fff;border:1px solid #7a7a7a;border-radius:2.5px;box-sizing:border-box;"></div>
<svg style="position:absolute;left:846px;top:250px" width="12" height="8" viewBox="846 250 12 8" fill="none"><path d="M848.4 252.6 L851.5 255.39999999999998 L854.6 252.6" stroke="#3a3a3a" stroke-width="1" stroke-linecap="round" stroke-linejoin="miter"/></svg>
<div style="position:absolute;left:938px;top:245px;width:17px;height:17px;background:#fff;border:1px solid #7a7a7a;border-radius:2.5px;box-sizing:border-box;"></div>
<svg style="position:absolute;left:941px;top:250px" width="12" height="8" viewBox="941 250 12 8" fill="none"><path d="M943.4 252.6 L946.5 255.39999999999998 L949.6 252.6" stroke="#3a3a3a" stroke-width="1" stroke-linecap="round" stroke-linejoin="miter"/></svg>
<div style="position:absolute;left:1045px;top:245px;width:17px;height:17px;background:#fff;border:1px solid #7a7a7a;border-radius:2.5px;box-sizing:border-box;"></div>
<svg style="position:absolute;left:1048px;top:250px" width="12" height="8" viewBox="1048 250 12 8" fill="none"><path d="M1050.4 252.6 L1053.5 255.39999999999998 L1056.6 252.6" stroke="#3a3a3a" stroke-width="1" stroke-linecap="round" stroke-linejoin="miter"/></svg>
<div class="t" style="right:990.2px;top:268.05px;font-size:14px;color:#000;letter-spacing:0.600px;">10</div>
<div class="t" style="left:147.7px;top:268.05px;font-size:14px;color:#000;letter-spacing:0.468px;">Deploy application to production</div>
<div class="t" style="left:429.7px;top:268.05px;font-size:14px;color:#000;letter-spacing:0.079px;">Launch &amp; Post-Launch</div>
<div class="t" style="left:583.4px;top:268.05px;font-size:14px;color:#000;letter-spacing:1.240px;">Medium</div>
<div class="t" style="left:1066px;top:268.05px;font-size:14px;color:#000;letter-spacing:0.450px;">Perform final deployment to production</div>
<div class="t" style="right:990.2px;top:288.05px;font-size:14px;color:#000;letter-spacing:0.600px;">9</div>
<div class="t" style="left:147.7px;top:288.05px;font-size:14px;color:#000;letter-spacing:0.303px;">Prepare launch marketing materials</div>
<div class="t" style="left:429.7px;top:288.05px;font-size:14px;color:#000;letter-spacing:0.079px;">Launch &amp; Post-Launch</div>
<div class="t" style="left:583.4px;top:288.05px;font-size:14px;color:#000;letter-spacing:1.240px;">Medium</div>
<div class="t" style="left:1066px;top:288.05px;font-size:14px;color:#000;letter-spacing:0.450px;">Create promotional materials</div>
<div class="t" style="right:990.2px;top:308.05px;font-size:14px;color:#000;letter-spacing:0.600px;">8</div>
<div class="t" style="left:147.7px;top:308.05px;font-size:14px;color:#000;letter-spacing:0.496px;">Perform functional testing</div>
<div class="t" style="left:430.7px;top:308.05px;font-size:14px;color:#000;letter-spacing:0.073px;">Testing &amp; QA</div>
<div class="t" style="left:583.4px;top:308.05px;font-size:14px;color:#000;letter-spacing:1.240px;">Medium</div>
<div class="t" style="left:1066px;top:308.05px;font-size:14px;color:#000;letter-spacing:0.450px;">Conduct end-to-end testing</div>
<div class="t" style="right:990.2px;top:328.05px;font-size:14px;color:#000;letter-spacing:0.600px;">7</div>
<div class="t" style="left:148.7px;top:328.05px;font-size:14px;color:#000;letter-spacing:0.459px;">Write unit &amp; integration tests</div>
<div class="t" style="left:430.7px;top:328.05px;font-size:14px;color:#000;letter-spacing:0.073px;">Testing &amp; QA</div>
<div class="t" style="left:583.4px;top:328.05px;font-size:14px;color:#000;letter-spacing:1.240px;">Medium</div>
<div class="t" style="left:1066px;top:328.05px;font-size:14px;color:#000;letter-spacing:0.450px;">Develop automated tests</div>
<div class="t" style="right:990.2px;top:348.05px;font-size:14px;color:#000;letter-spacing:0.600px;">6</div>
<div class="t" style="left:147.7px;top:348.05px;font-size:14px;color:#000;letter-spacing:0.412px;">Implement core application features</div>
<div class="t" style="left:429.7px;top:348.05px;font-size:14px;color:#000;letter-spacing:0.450px;">Development</div>
<div class="t" style="left:583.4px;top:348.05px;font-size:14px;color:#000;letter-spacing:1.240px;">Medium</div>
<div class="t" style="left:1066px;top:348.05px;font-size:14px;color:#000;letter-spacing:0.450px;">Build the primary features</div>
<div class="t" style="right:990.2px;top:368.05px;font-size:14px;color:#000;letter-spacing:0.600px;">5</div>
<div class="t" style="left:147.7px;top:368.05px;font-size:14px;color:#000;letter-spacing:0.444px;">Set up development environment &amp; repo</div>
<div class="t" style="left:429.7px;top:368.05px;font-size:14px;color:#000;letter-spacing:0.450px;">Development</div>
<div class="t" style="left:583.4px;top:368.05px;font-size:14px;color:#000;letter-spacing:1.240px;">Medium</div>
<div class="t" style="left:1066px;top:368.05px;font-size:14px;color:#000;letter-spacing:0.450px;">Configure the repository</div>
<div class="t" style="right:990.2px;top:388.05px;font-size:14px;color:#000;letter-spacing:0.600px;">4</div>
<div class="t" style="left:148.7px;top:388.05px;font-size:14px;color:#000;letter-spacing:0.314px;">Create interactive prototype (Figma)</div>
<div class="t" style="left:429.7px;top:388.05px;font-size:14px;color:#000;letter-spacing:0.368px;">Design &amp; Prototyping</div>
<div class="t" style="left:583.4px;top:388.05px;font-size:14px;color:#000;letter-spacing:1.240px;">Medium</div>
<div class="t" style="left:1066px;top:388.05px;font-size:14px;color:#000;letter-spacing:0.450px;">Build a clickable prototype</div>
<div class="t" style="right:990.2px;top:408.05px;font-size:14px;color:#000;letter-spacing:0.600px;">3</div>
<div class="t" style="left:147.7px;top:408.05px;font-size:14px;color:#000;letter-spacing:0.230px;">Develop wireframes for all key screens</div>
<div class="t" style="left:429.7px;top:408.05px;font-size:14px;color:#000;letter-spacing:0.368px;">Design &amp; Prototyping</div>
<div class="t" style="left:583.4px;top:408.05px;font-size:14px;color:#000;letter-spacing:1.240px;">Medium</div>
<div class="t" style="left:1066px;top:408.05px;font-size:14px;color:#000;letter-spacing:0.450px;">Create low-fidelity wireframes</div>
<div class="t" style="right:990.2px;top:428.05px;font-size:14px;color:#000;letter-spacing:0.600px;">2</div>
<div class="t" style="left:147.7px;top:428.05px;font-size:14px;color:#000;letter-spacing:0.436px;">Identify core features &amp; requirements</div>
<div class="t" style="left:429.7px;top:428.05px;font-size:14px;color:#000;letter-spacing:0.200px;">Planning &amp; Discovery</div>
<div class="t" style="left:583.4px;top:428.05px;font-size:14px;color:#000;letter-spacing:1.240px;">Medium</div>
<div class="t" style="left:1066px;top:428.05px;font-size:14px;color:#000;letter-spacing:0.450px;">Document requirements</div>
<div class="t" style="right:990.2px;top:448.05px;font-size:14px;color:#000;letter-spacing:0.600px;">1</div>
<div class="t" style="left:147.7px;top:448.05px;font-size:14px;color:#000;letter-spacing:0.230px;">Define project goals &amp; success metrics</div>
<div class="t" style="left:429.7px;top:448.05px;font-size:14px;color:#000;letter-spacing:0.200px;">Planning &amp; Discovery</div>
<div class="t" style="left:583.4px;top:448.05px;font-size:14px;color:#000;letter-spacing:1.240px;">Medium</div>
<div class="t" style="left:1066px;top:448.05px;font-size:14px;color:#000;letter-spacing:0.450px;">Outline clear goals</div>
<div class="t" style="right:273.0875000000001px;top:448.05px;font-size:14px;color:#000;letter-spacing:0.812px;">12/7/2025</div>
<div class="t" style="right:178.27777777777783px;top:448.05px;font-size:14px;color:#000;letter-spacing:0.722px;">12/12/2025</div>
</body></html>
